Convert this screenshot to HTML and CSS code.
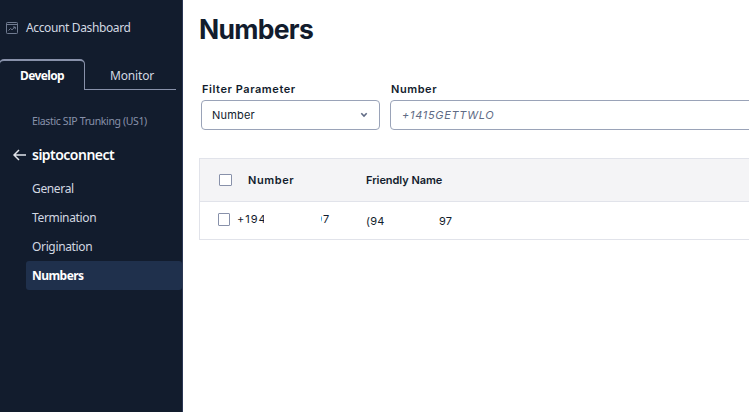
FILE: index.html
```html
<!DOCTYPE html>
<html lang="en">
<head>
<meta charset="utf-8">
<title>Numbers</title>
<link rel="stylesheet" href="styles.css">
</head>
<body>
<div class="app">
  <aside class="sidebar">
    <a class="dashboard">
      <svg class="dash-icon" width="12" height="12" viewBox="0 0 12 12"><rect x=".5" y=".5" width="11" height="11" rx=".8"/><path d="M.5 2.5h11M2.5 8.5l2-2 1.5 1.3L9 5M7 5h2.3v2.2"/></svg>
      <span>Account Dashboard</span>
    </a>
    <div class="tabs">
      <div class="tab active"><span>Develop</span></div>
      <div class="tab"><span>Monitor</span></div>
    </div>
    <nav class="nav">
      <div class="product">Elastic SIP Trunking (US1)</div>
      <div class="trunk">
        <svg class="back" width="13" height="12" viewBox="0 0 13 12"><path d="M13 6H1.2M6 1L1 6l5 5"/></svg>
        <span>siptoconnect</span>
      </div>
      <a class="item general">General</a>
      <a class="item termination">Termination</a>
      <a class="item origination">Origination</a>
      <a class="item selected">Numbers</a>
    </nav>
  </aside>
  <main class="main">
    <h1>Numbers</h1>
    <div class="filters">
      <div class="field">
        <label class="wide">Filter Parameter</label>
        <div class="control select"><span>Number</span>
          <svg class="chevron" width="8" height="6" viewBox="0 0 8 6"><path d="M1.3 1.3L4 4l2.7-2.7"/></svg>
        </div>
      </div>
      <div class="field grow">
        <label>Number</label>
        <div class="control input"><span>+1415GETTWLO</span></div>
      </div>
    </div>
    <div class="table">
      <div class="row head">
        <i class="box"></i><span class="num">Number</span><span class="name">Friendly Name</span>
      </div>
      <div class="row body">
        <i class="box"></i>
        <span class="num"><span class="cut-end">+194</span><span class="cut-start"><b>9</b></span><span>7</span></span>
        <span class="name"><span class="area">(94</span><span>97</span></span>
      </div>
    </div>
  </main>
</div>
</body>
</html>
```
FILE: styles.css
```css
* { box-sizing: border-box; }
body { margin: 0; background: #fff; color: #121c2d; font-family: Inter, sans-serif; overflow: hidden; }
.app { display: flex; height: 412px; width: 749px; overflow: hidden; }
.sidebar { flex: none; width: 183px; background: #121c2d; border-right: 1px solid #2c3855; font-family: "Noto Sans", sans-serif; font-size: 12px; color: #d3d8e2; white-space: nowrap; }
.dashboard { display: flex; align-items: center; gap: 8px; padding-left: 6px; margin-top: 18px; height: 20px; letter-spacing: -.37px; }
.dashboard span { position: relative; top: -1px; }
.dash-icon { fill: none; stroke: #707b91; }
.tabs { display: flex; height: 31px; margin-top: 21px; width: 176px; }
.tab { flex: 1; display: flex; align-items: center; justify-content: center; padding: 2px 0 0 3px; border-bottom: 1px solid #8891aa; letter-spacing: -.15px; }
.tab.active { flex: none; width: 86px; margin-left: -1px; padding: 0; border: 1px solid #8891aa; border-top-width: 2px; border-bottom: 0; border-radius: 5px 5px 0 0; color: #fff; font-weight: 700; letter-spacing: -.65px; }
.nav { padding: 21px 0 0 26px; }
.product { height: 20px; line-height: 20px; padding-left: 6px; font-size: 10.5px; letter-spacing: -.37px; color: #8891aa; }
.trunk { display: flex; align-items: center; gap: 6px; height: 20px; margin: 14px 0 9px -13px; color: #fff; font-size: 14px; font-weight: 600; letter-spacing: -.52px; }
.trunk span { position: relative; top: -1px; }
.back { fill: none; stroke: #e1e3ea; stroke-width: 1.5; }
.item { display: block; height: 29px; line-height: 29px; padding-left: 6px; letter-spacing: -.35px; }
.selected { background: #1f304c; color: #fff; font-weight: 700; letter-spacing: -.55px; border-radius: 3px; }
.main { flex: 1; min-width: 0; padding-left: 16px; }
h1 { margin: 12px 0 0; height: 34px; line-height: 34px; font-size: 26.5px; font-weight: 700; letter-spacing: -.7px; }
.filters { display: flex; gap: 10px; padding-left: 2px; margin-top: 35px; }
.field { flex: none; width: 179px; }
.grow { width: 400px; }
label { display: block; height: 19px; line-height: 16px; padding-left: 1px; font-size: 11px; font-weight: 600; letter-spacing: .56px; }
.control { height: 30px; border: 1px solid #9aa3b8; border-radius: 4px; display: flex; align-items: center; justify-content: space-between; padding: 0 11px 0 10px; font-size: 11px; letter-spacing: .2px; }
.chevron { fill: none; stroke: #606b85; stroke-width: 1.6; }
.input { padding-left: 11px; color: #606b85; font-style: italic; letter-spacing: .7px; }
.table { margin-top: 28px; width: 620px; border: 1px solid #e1e3ea; }
.row { display: flex; align-items: center; font-size: 11px; }
.head { height: 43px; padding-left: 19px; background: #f4f4f6; border-bottom: 1px solid #e1e3ea; font-weight: 600; }
.body { height: 37px; padding-left: 18px; }
.box { width: 13px; height: 12px; flex: none; background: #fff; border: 1px solid #8891aa; border-radius: 1px; }
.body .box { width: 12px; height: 13px; position: relative; top: -1px; }
.head .num { width: 118px; margin-left: 16px; letter-spacing: .6px; }
.head .name { letter-spacing: -.05px; }
.body .num { display: flex; width: 129px; margin-left: 7px; padding-bottom: 3px; letter-spacing: 1px; }
.cut-end { width: 27px; margin-right: 57px; overflow: hidden; }
.cut-start { display: flex; justify-content: flex-end; width: 2px; overflow: hidden; }
.cut-start b { font-weight: 400; }
.body .name { display: flex; padding-top: 1px; letter-spacing: .2px; }
.area { width: 73px; }
```
